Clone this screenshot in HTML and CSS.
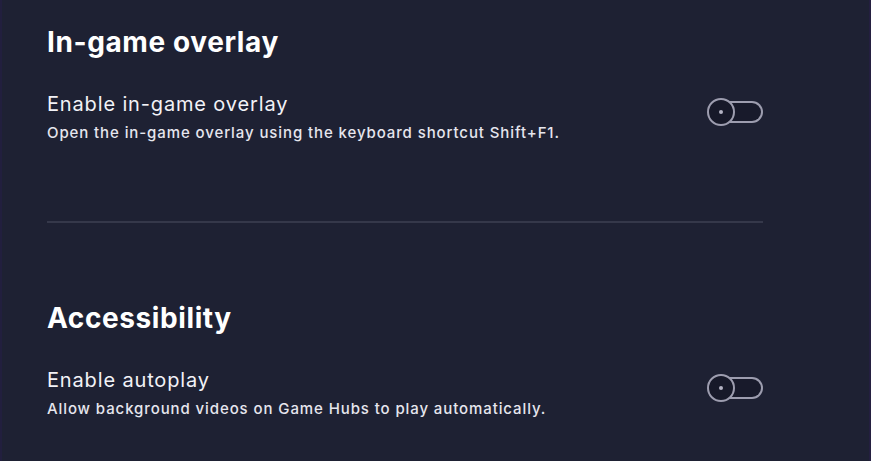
FILE: index.html
```html
<!DOCTYPE html>
<html lang="en">
<head>
    <meta charset="UTF-8">
    <meta name="viewport" content="width=device-width, initial-scale=1.0">
    <title>Settings</title>
    <link rel="stylesheet" href="styles.css">
</head>
<body>
    <div class="settings">
        <section class="group">
            <h2>In-game overlay</h2>
            <div class="row">
                <div class="row-text">
                    <div class="row-label">Enable in-game overlay</div>
                    <div class="row-desc">Open the in-game overlay using the keyboard shortcut Shift+F1.</div>
                </div>
                <button class="toggle" aria-label="Enable in-game overlay"><span class="knob"></span></button>
            </div>
        </section>

        <hr class="divider">

        <section class="group">
            <h2>Accessibility</h2>
            <div class="row">
                <div class="row-text">
                    <div class="row-label">Enable autoplay</div>
                    <div class="row-desc">Allow background videos on Game Hubs to play automatically.</div>
                </div>
                <button class="toggle" aria-label="Enable autoplay"><span class="knob"></span></button>
            </div>
        </section>
    </div>
</body>
</html>
```

FILE: styles.css
```css
html, body {
    height: 100%;
}
body {
    margin: 0;
    background-color: #1e2133;
    font-family: Inter, "Noto Sans", sans-serif;
    color: #f2f2f7;
    box-sizing: border-box;
    border-left: 2px solid #221f3e;
    border-right: 2px solid #241f40;
}
.settings {
    width: 716px;
    padding: 25px 0 0 45px;
}
.group h2 {
    margin: 0;
    font-size: 28px;
    line-height: 34px;
    font-weight: 700;
    letter-spacing: 0.6px;
    color: #fff;
}
.row {
    display: flex;
    align-items: flex-start;
    justify-content: space-between;
    margin-top: 33px;
}
.row-label {
    font-size: 20px;
    line-height: 24px;
    font-weight: 400;
    letter-spacing: 0.85px;
}
.row-desc {
    margin-top: 7px;
    font-size: 15px;
    line-height: 20px;
    font-weight: 500;
    letter-spacing: 0.9px;
    color: #e6e6ee;
}
.toggle {
    position: relative;
    width: 56px;
    height: 28px;
    margin-top: 6px;
    padding: 0;
    border: none;
    background: none;
    cursor: pointer;
}
.toggle::before {
    content: "";
    position: absolute;
    left: 12px;
    right: 0;
    top: 3px;
    height: 22px;
    box-sizing: border-box;
    border: 2px solid #9d9daf;
    border-left: none;
    border-radius: 0 12px 12px 0;
    background-color: #181a2b;
}
.knob {
    position: absolute;
    left: 0;
    top: 0;
    width: 28px;
    height: 28px;
    box-sizing: border-box;
    border: 2px solid #9d9daf;
    border-radius: 50%;
    background-color: #171929;
}
.knob::after {
    content: "";
    position: absolute;
    left: 10px;
    top: 10px;
    width: 4px;
    height: 4px;
    border-radius: 50%;
    background-color: #b4b4c4;
}
.divider {
    margin: 78px 0 78px;
    border: none;
    height: 2px;
    background-color: #35384a;
}
```
